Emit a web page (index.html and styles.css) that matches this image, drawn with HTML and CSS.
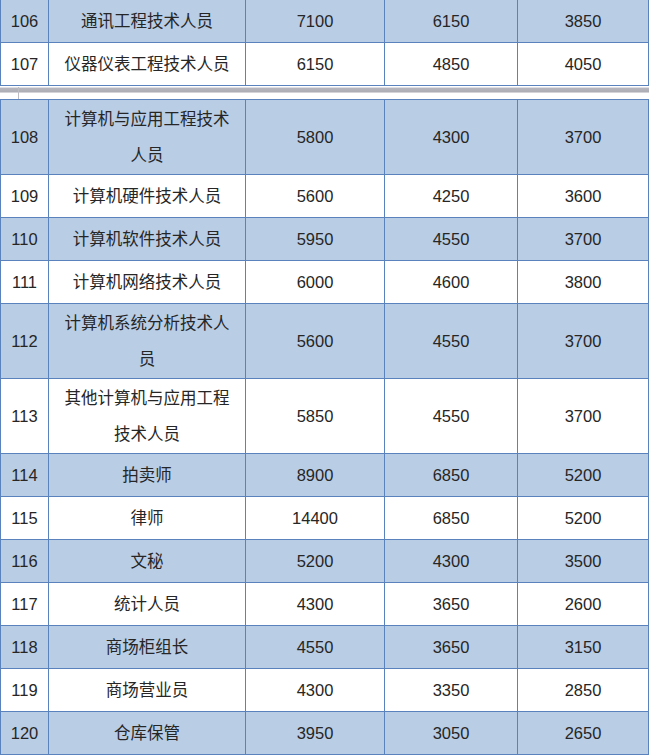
FILE: index.html
```html
<!DOCTYPE html>
<html lang="zh-CN">
<head>
<meta charset="utf-8">
<title>职位薪酬表</title>
<link rel="stylesheet" href="styles.css">
</head>
<body>
<div class="page">
  <table class="grid grid-top">
    <colgroup>
      <col class="c-no"><col class="c-name"><col class="c-a"><col class="c-b"><col class="c-c">
    </colgroup>
    <tbody>
      <tr class="blue"><td>106</td><td>通讯工程技术人员</td><td>7100</td><td>6150</td><td>3850</td></tr>
      <tr><td>107</td><td>仪器仪表工程技术人员</td><td>6150</td><td>4850</td><td>4050</td></tr>
    </tbody>
  </table>
  <div class="sep"><div class="tick"></div></div>
  <table class="grid">
    <colgroup>
      <col class="c-no"><col class="c-name"><col class="c-a"><col class="c-b"><col class="c-c">
    </colgroup>
    <tbody>
      <tr class="blue"><td>108</td><td>计算机与应用工程技术人员</td><td>5800</td><td>4300</td><td>3700</td></tr>
      <tr><td>109</td><td>计算机硬件技术人员</td><td>5600</td><td>4250</td><td>3600</td></tr>
      <tr class="blue"><td>110</td><td>计算机软件技术人员</td><td>5950</td><td>4550</td><td>3700</td></tr>
      <tr><td>111</td><td>计算机网络技术人员</td><td>6000</td><td>4600</td><td>3800</td></tr>
      <tr class="blue"><td>112</td><td>计算机系统分析技术人员</td><td>5600</td><td>4550</td><td>3700</td></tr>
      <tr><td>113</td><td>其他计算机与应用工程技术人员</td><td>5850</td><td>4550</td><td>3700</td></tr>
      <tr class="blue"><td>114</td><td>拍卖师</td><td>8900</td><td>6850</td><td>5200</td></tr>
      <tr><td>115</td><td>律师</td><td>14400</td><td>6850</td><td>5200</td></tr>
      <tr class="blue"><td>116</td><td>文秘</td><td>5200</td><td>4300</td><td>3500</td></tr>
      <tr><td>117</td><td>统计人员</td><td>4300</td><td>3650</td><td>2600</td></tr>
      <tr class="blue"><td>118</td><td>商场柜组长</td><td>4550</td><td>3650</td><td>3150</td></tr>
      <tr><td>119</td><td>商场营业员</td><td>4300</td><td>3350</td><td>2850</td></tr>
      <tr class="blue"><td>120</td><td>仓库保管</td><td>3950</td><td>3050</td><td>2650</td></tr>
    </tbody>
  </table>
</div>
</body>
</html>
```
FILE: styles.css
```css
html, body {
  margin: 0;
  padding: 0;
  background: #ffffff;
}
.page {
  width: 649px;
  overflow: hidden;
}
.grid {
  width: 648px;
  table-layout: fixed;
  border-collapse: collapse;
  font-family: "Liberation Sans", "Noto Sans CJK SC", sans-serif;
  font-size: 16.5px;
  color: #262626;
}
.grid-top {
  margin-top: -1px;
}
.c-no { width: 48px; }
.c-name { width: 197px; }
.c-a { width: 139px; }
.c-b { width: 133px; }
.c-c { width: 131px; }
.grid tr {
  height: 43px;
}
.grid td {
  border: 1px solid #5a82bd;
  padding: 1px 10px;
  line-height: 36px;
  text-align: center;
  vertical-align: middle;
  background: #ffffff;
}
.grid td:first-child {
  padding: 1px 0;
}
.grid tr.blue td {
  background: #b9cde5;
}
.sep {
  height: 13px;
  display: flex;
  padding-left: 18px;
  background: linear-gradient(to bottom,
    #ffffff 0, #ffffff 1px,
    #dedee2 1px, #dedee2 2px,
    #b7b7bf 2px, #adadb5 6px,
    #d4d4d8 6px, #d4d4d8 7px,
    #ffffff 7px, #ffffff 100%);
}
.tick {
  width: 1px;
  height: 12px;
  margin-top: 1px;
  background: #bcbcc2;
}
```
